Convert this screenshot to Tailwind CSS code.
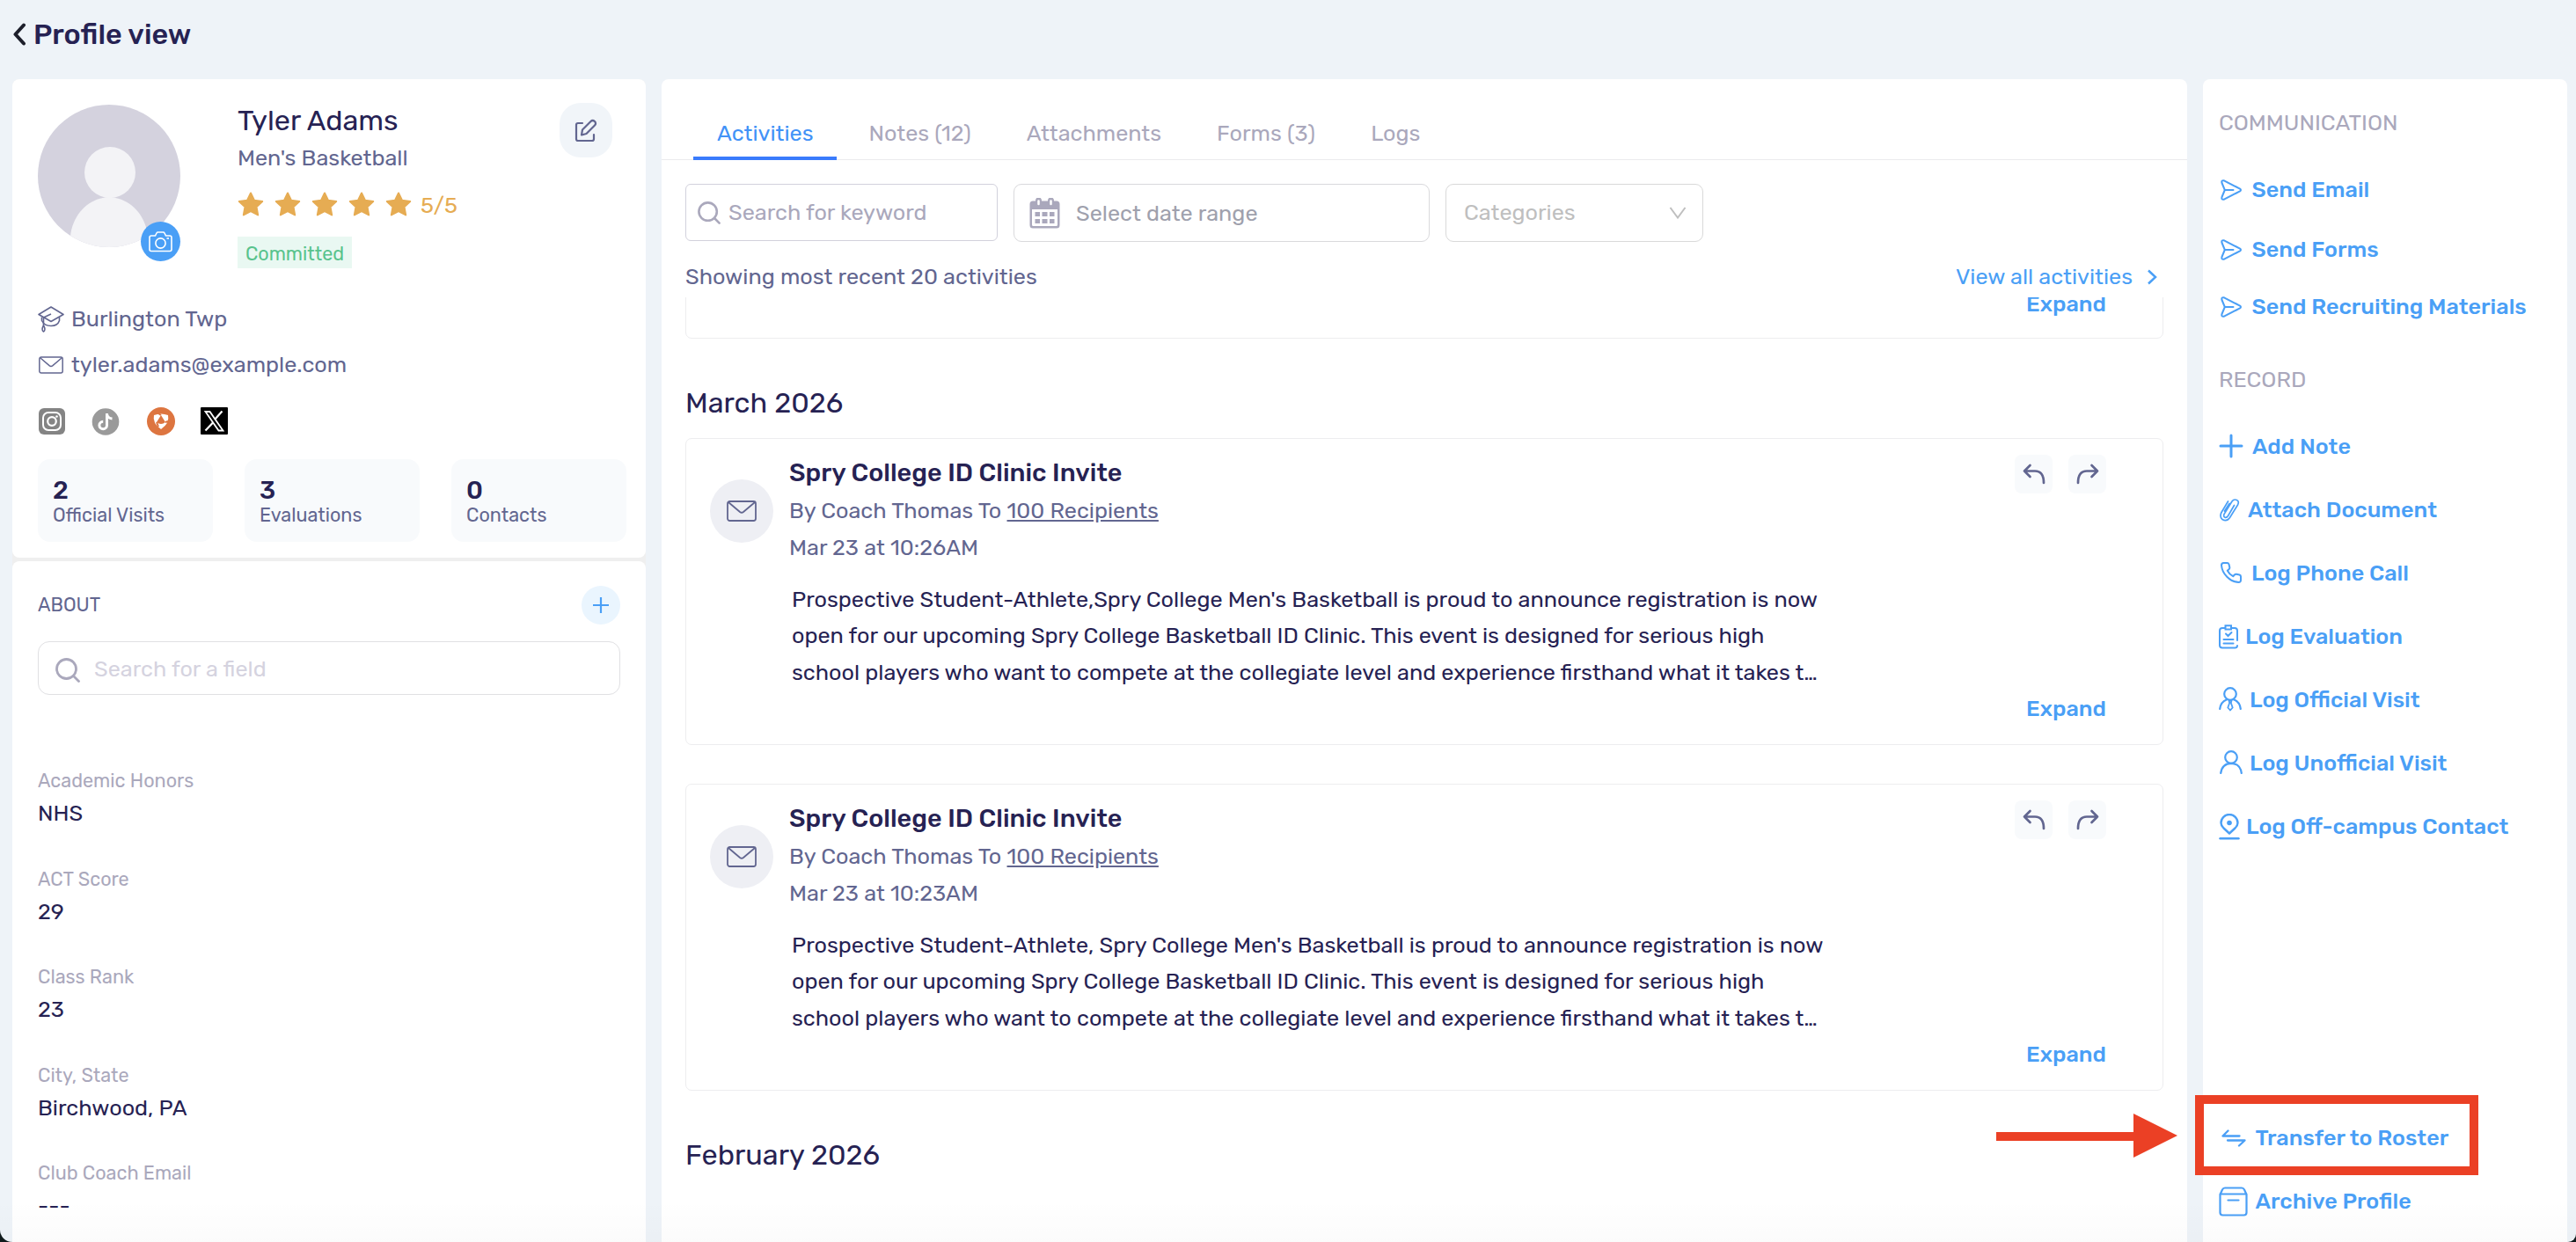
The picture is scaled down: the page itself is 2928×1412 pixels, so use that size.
<!DOCTYPE html>
<html>

<head>
    <meta charset="utf-8">
    <title>Profile view</title>
    <script src="https://cdn.jsdelivr.net/npm/@tailwindcss/browser@4"></script>
</head>

<body class="bg-[#101a1c] font-['Rubik','Roboto',sans-serif] text-[25.2px] text-[#262253]">

    <!-- shared icons -->
    <svg class="hidden">
        <symbol id="star" viewBox="0 0 30 28">
            <path d="M15 1.5l4 8.3 9.2 1.2-6.7 6.2 1.7 9.2-8.2-4.4-8.2 4.4 1.7-9.2L1.800 11l9.200-1.200z" fill="#e6ac53" stroke="#e6ac53" stroke-width="2" stroke-linejoin="round" />
        </symbol>
        <symbol id="mail" viewBox="0 0 34 24">
            <rect x="1" y="1" width="32" height="22" rx="2.5" fill="none" stroke="currentColor" stroke-width="1.8" />
            <path d="M2 2l13 11q2 1.5 4 0L32 2" fill="none" stroke="currentColor" stroke-width="1.8" />
        </symbol>
        <symbol id="search" viewBox="0 0 28 28">
            <circle cx="12.5" cy="12.5" r="11" fill="none" stroke="currentColor" stroke-width="2.8" />
            <path d="M20.5 20.5l6 6" stroke="currentColor" stroke-width="2.8" stroke-linecap="round" />
        </symbol>
        <symbol id="send" viewBox="0 0 24 24">
            <path d="M4 1.3L22 10.6q2 1.4 0 2.8L4 22.7Q.6 23.4 1.5 20L4.8 12 1.5 4Q.6.6 4 1.3zM5 12h9.5" fill="none" stroke="currentColor" stroke-width="2" stroke-linecap="round" stroke-linejoin="round" />
        </symbol>
        <symbol id="reply" viewBox="0 0 26 24">
            <path d="M8.5 2L2 8.5l6.5 6.5M2 8.5h12q10 0 10 13.5" fill="none" stroke="currentColor" stroke-width="2.7" stroke-linecap="round" stroke-linejoin="round" />
        </symbol>
    </svg>

    <div class="relative w-[2928px] h-[1412px] overflow-hidden bg-[#eef3f8] rounded-bl-[14px] rounded-br-[9px]">

        <header class="flex items-center h-[90px] pb-3 pl-[14px]">
            <svg class="w-4 h-[26px] text-[#1d1f2b]" viewBox="0 0 16 26"><path d="M13 2.5L3.5 13 13 23.5" fill="none" stroke="currentColor" stroke-width="4" stroke-linecap="round" stroke-linejoin="round" /></svg>
            <h1 class="ml-2 text-[32.4px] leading-[44px] font-medium">Profile view</h1>
        </header>

        <div class="flex h-[1322px]">

            <!-- left column -->
            <aside class="ml-[14px] w-[720px] flex flex-col bg-[#efefef] rounded-t-lg">
                <section class="h-[544px] bg-white rounded-lg pl-[29px]">
                    <div class="h-[247px] flex">
                        <div class="relative w-[162px] h-[162px] mt-[29px]">
                            <svg class="w-[162px] h-[162px] rounded-full bg-[#d4d2de]" viewBox="0 0 162 162" fill="#f3f3f6">
                                <circle cx="82" cy="77" r="29" />
                                <path d="M37 162v-12c2-24 20-44 44-45 24 1 42 21 44 45v12z" />
                            </svg>
                            <div class="absolute left-[117px] top-[133px] w-[45px] h-[45px] rounded-full bg-[#4a9ff6] flex items-center justify-center">
                                <svg class="w-[27px] h-6 text-white" viewBox="0 0 27 24" fill="none" stroke="currentColor" stroke-width="1.6">
                                    <path d="M3 5h4.500L9 2q.5-1 1.500-1h6q1 0 1.500 1l1.500 3H24q2 0 2 2v13.500q0 2-2 2H3q-2 0-2-2V7q0-2 2-2z" />
                                    <circle cx="13.5" cy="13.5" r="5.6" />
                                    <path d="M20.5 8h2.5" />
                                </svg>
                            </div>
                        </div>
                        <div class="ml-[65px] pt-[25px] w-[366px]">
                            <div class="text-[32.4px] leading-[44px]">Tyler Adams</div>
                            <div class="leading-[41px] text-[#626690]">Men's Basketball</div>
                            <div class="mt-3 h-10 flex items-center gap-3">
                                <svg class="w-[30px] h-7"><use href="#star" /></svg>
                                <svg class="w-[30px] h-7"><use href="#star" /></svg>
                                <svg class="w-[30px] h-7"><use href="#star" /></svg>
                                <svg class="w-[30px] h-7"><use href="#star" /></svg>
                                <svg class="w-[30px] h-7"><use href="#star" /></svg>
                                <span class="-ml-0.5 pt-1 text-[#e6ac53]">5/5</span>
                            </div>
                            <div class="mt-[17px] w-[130px] h-9 pt-0.5 text-center text-[21.6px] leading-[35px] bg-[#e9f8f2] text-[#58c38d]">Committed</div>
                        </div>
                        <div class="mt-[27px] w-[60px] h-[62px] rounded-[24px] bg-[#f1f5f9] flex items-center justify-center">
                            <svg class="w-[26px] h-[27px] text-[#626690]" viewBox="0 0 26 27" fill="none" stroke="currentColor" stroke-width="2.2" stroke-linejoin="round" stroke-linecap="round">
                                <path d="M9 5H4Q2 5 2 7v16q0 2 2 2h16q2 0 2-2v-5" />
                                <path d="M8 18.500l1-6L18.500 3q2-2 4.500 0 2 2.500 0 4.500L13.500 17z" />
                            </svg>
                        </div>
                    </div>

                    <div class="h-[52px] flex items-center text-[#626690]">
                        <svg class="w-[30px] h-[30px]" viewBox="0 0 30 30" fill="none" stroke="currentColor" stroke-width="1.6" stroke-linejoin="round">
                            <path d="M1 9.500L15 1l14 8.500-14 8zM15 9l-8.500 4v9" />
                            <path d="M4.500 12.500v4q3 6 10.500 6t9.500-6v-4" />
                            <path d="M6.500 22q-3 5 0 7 3-2 0-7z" />
                        </svg>
                        <span class="ml-2">Burlington Twp</span>
                    </div>
                    <div class="h-[52px] flex items-center text-[#626690]">
                        <svg class="ml-px w-[28px] h-5"><use href="#mail" /></svg>
                        <span class="ml-[9px]">tyler.adams@example.com</span>
                    </div>

                    <div class="h-[75px] flex items-center">
                        <svg class="ml-px w-[30px] h-[30px]" viewBox="0 0 30 30" fill="none" stroke="#fff">
                            <rect width="30" height="30" rx="6" fill="#848484" stroke="none" />
                            <rect x="5" y="5" width="20" height="20" rx="6" stroke-width="2" />
                            <circle cx="15" cy="15" r="4.8" stroke-width="2.2" />
                            <circle cx="20.5" cy="9.5" r="1.3" fill="#fff" stroke="none" />
                        </svg>
                        <svg class="ml-[30px] w-8 h-8" viewBox="0 0 32 32">
                            <circle cx="16" cy="16.5" r="15.3" fill="#9a9a9a" />
                            <path d="M17.500 7v13.500a4.300 4.300 0 1 1-4.300-4.300M17.500 8q1 4.500 6 5" fill="none" stroke="#fff" stroke-width="3" />
                        </svg>
                        <svg class="ml-[31px] w-8 h-8" viewBox="0 0 32 32">
                            <circle cx="16" cy="16" r="16" fill="#dd7540" />
                            <path d="M8 9q8-3 16 0 2 9-8 16Q6 18 8 9z" fill="#fff" />
                            <path d="M16 9l5 8q-5 4-10 0z" fill="#dd7540" />
                            <path d="M16 9l-3-2M21 17l3-1M11 17l2 5" stroke="#dd7540" stroke-width="2" />
                        </svg>
                        <svg class="ml-[29px] w-[31px] h-[31px]" viewBox="0 0 31 31" fill="none" stroke="#fff">
                            <rect width="31" height="31" rx="1" fill="#000" stroke="none" />
                            <path d="M5.500 5h5l15 21.500h-5z" stroke-width="1.8" />
                            <path d="M24.500 4.500l-8.500 9.500M14 17.500l-8.500 9" stroke-width="2.2" />
                        </svg>
                    </div>

                    <div class="mt-[6px] flex gap-9">
                        <div class="w-[199px] h-[94px] rounded-[14px] bg-[#f8fafc] pt-5 pl-[17px]">
                            <div class="text-[28.8px] leading-[30px] font-medium">2</div>
                            <div class="text-[21.6px] leading-[28px] text-[#626690]">Official Visits</div>
                        </div>
                        <div class="w-[199px] h-[94px] rounded-[14px] bg-[#f8fafc] pt-5 pl-[17px]">
                            <div class="text-[28.8px] leading-[30px] font-medium">3</div>
                            <div class="text-[21.6px] leading-[28px] text-[#626690]">Evaluations</div>
                        </div>
                        <div class="w-[199px] h-[94px] rounded-[14px] bg-[#f8fafc] pt-5 pl-[17px]">
                            <div class="text-[28.8px] leading-[30px] font-medium">0</div>
                            <div class="text-[21.6px] leading-[28px] text-[#626690]">Contacts</div>
                        </div>
                    </div>
                </section>

                <section class="mt-1 flex-1 bg-white rounded-t-lg px-[29px] pt-7">
                    <div class="h-11 flex items-center justify-between">
                        <span class="text-[21.6px] text-[#626690]">ABOUT</span>
                        <div class="w-11 h-11 rounded-full bg-[#eaf5fe] flex items-center justify-center text-[#4a9ff6]">
                            <svg class="w-[18px] h-[18px]" viewBox="0 0 18 18"><path d="M9 0v18M0 9h18" stroke="currentColor" stroke-width="2.2" /></svg>
                        </div>
                    </div>
                    <div class="mt-[19px] h-[61px] border border-[#e0e0e3] rounded-[13px] flex items-center pl-[19px]">
                        <svg class="w-7 h-7 mt-1 text-[#aaa8bc]"><use href="#search" /></svg>
                        <span class="ml-4 pt-0.5 text-[#d5d3df]">Search for a field</span>
                    </div>

                    <div class="mt-20">
                        <div class="h-[111.5px]">
                            <div class="text-[21.6px] leading-9 text-[#aaa8bc]">Academic Honors</div>
                            <div class="leading-[37px]">NHS</div>
                        </div>
                        <div class="h-[111.5px]">
                            <div class="text-[21.6px] leading-9 text-[#aaa8bc]">ACT Score</div>
                            <div class="leading-[37px]">29</div>
                        </div>
                        <div class="h-[111.5px]">
                            <div class="text-[21.6px] leading-9 text-[#aaa8bc]">Class Rank</div>
                            <div class="leading-[37px]">23</div>
                        </div>
                        <div class="h-[111.5px]">
                            <div class="text-[21.6px] leading-9 text-[#aaa8bc]">City, State</div>
                            <div class="leading-[37px]">Birchwood, PA</div>
                        </div>
                        <div>
                            <div class="text-[21.6px] leading-9 text-[#aaa8bc]">Club Coach Email</div>
                            <div class="leading-[37px]">---</div>
                        </div>
                    </div>
                </section>
            </aside>

            <!-- activities -->
            <main class="ml-[18px] w-[1734px] bg-white rounded-t-lg flex flex-col">
                <nav class="h-[92px] shrink-0 border-b border-[#ebebed] flex items-end gap-[63px] pl-[63px] text-[#aaa8bc] leading-[41px]">
                    <div class="relative pb-[9px] text-[#4292f7]">Activities<span class="absolute -left-[27px] -right-[26px] -bottom-px h-1 bg-[#3a7bfc]"></span></div>
                    <div class="pb-[9px]">Notes (12)</div>
                    <div class="pb-[9px]">Attachments</div>
                    <div class="pb-[9px]">Forms (3)</div>
                    <div class="pb-[9px]">Logs</div>
                </nav>

                <div class="mt-[27px] ml-[27px] flex gap-[18px]">
                    <div class="w-[355px] h-[65px] border border-[#d2d1dc] rounded-[6px] flex items-center pl-[13px] text-[#aaa8bc]">
                        <svg class="w-[26px] h-[26px]"><use href="#search" /></svg>
                        <span class="ml-[9px]">Search for keyword</span>
                    </div>
                    <div class="w-[473px] h-[66px] border border-[#d9d9dc] rounded-[9px] flex items-center pl-[17px] text-[#9fa1ad]">
                        <svg class="w-[35px] h-[35px] text-[#aaa8bc]" viewBox="0 0 35 35">
                            <path d="M4 3.500h27q3.500 0 3.500 3.500v24q0 3.500-3.500 3.500H4Q.5 34.500.5 31V7Q.5 3.500 4 3.500zM3 13v17.500q0 1.500 1.500 1.500h26q1.500 0 1.500-1.500V13z" fill="currentColor" fill-rule="evenodd" />
                            <path d="M10.500 3v4M24.500 3v4" stroke="currentColor" stroke-width="7" stroke-linecap="round" />
                            <path d="M10.500 3.500v3.500M24.500 3.500v3.500" stroke="#fff" stroke-width="2.5" stroke-linecap="round" />
                            <path d="M6.500 18.500h5.500m2.500 0h6m2.500 0h5.500M6.500 26.500h5.500m2.500 0h6m2.500 0h5.500" stroke="currentColor" stroke-width="5" />
                        </svg>
                        <span class="ml-[18px] pt-0.5">Select date range</span>
                    </div>
                    <div class="w-[293px] h-[66px] border border-[#d9d9d9] rounded-[9px] flex items-center justify-between pl-5 pr-[18px] text-[#bfbfbf]">
                        <span>Categories</span>
                        <svg class="w-5 h-3.5" viewBox="0 0 20 14"><path d="M1.5 1L10 12.5 18.5 1" fill="none" stroke="currentColor" stroke-width="2" /></svg>
                    </div>
                </div>

                <div class="mt-5 mx-[27px] h-[43px] pb-[3px] flex items-center justify-between">
                    <span class="text-[#626690]">Showing most recent 20 activities</span>
                    <span class="flex items-center text-[#4a9ff6] pr-[7px]">View all activities
                        <svg class="ml-4 w-[12px] h-[18px]" viewBox="0 0 12 18"><path d="M2 1.5L10 9l-8 7.5" fill="none" stroke="currentColor" stroke-width="2.5" /></svg>
                    </span>
                </div>

                <div class="flex-1 overflow-hidden pl-[27px]">
                    <div class="-mt-[100px] w-[1680px] h-[147px] border border-[#ededef] rounded-[7px] flex items-end justify-end pb-[18px] pr-16">
                        <span class="font-medium leading-[41px] text-[#4a9ff6]">Expand</span>
                    </div>

                    <h2 class="mt-[51px] mb-[18px] text-[32.4px] leading-[44px]">March 2026</h2>

                    <article class="w-[1680px] h-[349px] border border-[#ededef] rounded-[7px] flex pl-[27px] pr-16">
                        <div class="mt-[46px] w-[72px] h-[72px] rounded-full bg-[#eeeff4] flex items-center justify-center text-[#626690]">
                            <svg class="w-[34px] h-6"><use href="#mail" /></svg>
                        </div>
                        <div class="ml-[18px] flex-1 pt-4">
                            <div class="flex justify-between">
                                <div class="text-[#626690] leading-[42px]">
                                    <h3 class="text-[28.8px] leading-[44px] font-medium text-[#262253]">Spry College ID Clinic Invite</h3>
                                    <p>By Coach Thomas To <span class="underline">100 Recipients</span></p>
                                    <p>Mar 23 at 10:26AM</p>
                                </div>
                                <div class="mt-0.5 flex gap-[18px] text-[#626690]">
                                    <span class="w-[43px] h-11 rounded-lg bg-[#f8fafc] flex items-center justify-center"><svg class="w-[26px] h-6"><use href="#reply" /></svg></span>
                                    <span class="w-[43px] h-11 rounded-lg bg-[#f8fafc] flex items-center justify-center"><svg class="w-[26px] h-6 -scale-x-100"><use href="#reply" /></svg></span>
                                </div>
                            </div>
                            <p class="mt-[18px] ml-[3px] leading-[41.3px] whitespace-nowrap">Prospective Student-Athlete,Spry College Men's Basketball is proud to announce registration is now<br>open for our upcoming Spry College Basketball ID Clinic. This event is designed for serious high<br>school players who want to compete at the collegiate level and experience firsthand what it takes t…</p>
                            <div class="text-right font-medium leading-[41px] text-[#4a9ff6]">Expand</div>
                        </div>
                    </article>

                    <article class="mt-[44px] w-[1680px] h-[349px] border border-[#ededef] rounded-[7px] flex pl-[27px] pr-16">
                        <div class="mt-[46px] w-[72px] h-[72px] rounded-full bg-[#eeeff4] flex items-center justify-center text-[#626690]">
                            <svg class="w-[34px] h-6"><use href="#mail" /></svg>
                        </div>
                        <div class="ml-[18px] flex-1 pt-4">
                            <div class="flex justify-between">
                                <div class="text-[#626690] leading-[42px]">
                                    <h3 class="text-[28.8px] leading-[44px] font-medium text-[#262253]">Spry College ID Clinic Invite</h3>
                                    <p>By Coach Thomas To <span class="underline">100 Recipients</span></p>
                                    <p>Mar 23 at 10:23AM</p>
                                </div>
                                <div class="mt-0.5 flex gap-[18px] text-[#626690]">
                                    <span class="w-[43px] h-11 rounded-lg bg-[#f8fafc] flex items-center justify-center"><svg class="w-[26px] h-6"><use href="#reply" /></svg></span>
                                    <span class="w-[43px] h-11 rounded-lg bg-[#f8fafc] flex items-center justify-center"><svg class="w-[26px] h-6 -scale-x-100"><use href="#reply" /></svg></span>
                                </div>
                            </div>
                            <p class="mt-[18px] ml-[3px] leading-[41.3px] whitespace-nowrap">Prospective Student-Athlete, Spry College Men's Basketball is proud to announce registration is now<br>open for our upcoming Spry College Basketball ID Clinic. This event is designed for serious high<br>school players who want to compete at the collegiate level and experience firsthand what it takes t…</p>
                            <div class="text-right font-medium leading-[41px] text-[#4a9ff6]">Expand</div>
                        </div>
                    </article>

                    <h2 class="mt-[51px] text-[32.4px] leading-[44px]">February 2026</h2>
                </div>
            </main>

            <!-- actions -->
            <aside class="ml-[18px] w-[414px] bg-white rounded-t-lg pl-[18px] pt-[29px] font-medium text-[#4a9ff6]">
                <div class="h-10 leading-10 font-normal text-[#aaa8bc]">COMMUNICATION</div>
                <div class="mt-[23px] h-[68px] flex items-center">
                    <span class="w-[37.5px] pl-0.5"><svg class="w-6 h-6"><use href="#send" /></svg></span>Send Email
                </div>
                <div class="h-[68px] flex items-center">
                    <span class="w-[37.5px] pl-0.5"><svg class="w-6 h-6"><use href="#send" /></svg></span>Send Forms
                </div>
                <div class="h-[62px] flex items-center">
                    <span class="w-[37.5px] pl-0.5"><svg class="w-6 h-6"><use href="#send" /></svg></span>Send Recruiting Materials
                </div>

                <div class="mt-[31px] h-10 leading-10 font-normal text-[#aaa8bc]">RECORD</div>
                <div class="mt-[21px] h-[72px] flex items-center">
                    <span class="w-[38px]">
                        <svg class="w-7 h-7 -mt-0.5" viewBox="0 0 28 28"><path d="M14 2v24M2 14h24" stroke="currentColor" stroke-width="3" stroke-linecap="round" /></svg>
                    </span>Add Note
                </div>
                <div class="h-[72px] flex items-center">
                    <span class="w-[33px]">
                        <svg class="w-6 h-[26px]" viewBox="0 0 24 26" fill="none" stroke="currentColor" stroke-width="1.7" stroke-linecap="round">
                            <path d="M10.500 3L3 15.500Q.5 20.500 4 23.500q5 3 8.500-2L21.500 7q2-4-1-5.500-3.500-1.500-5.500 1.500L6 17.500q-1 3 1 3.700 2 .6 3.500-1.700L17.500 7.500M12 5.500L6.500 14" />
                        </svg>
                    </span>Attach Document
                </div>
                <div class="h-[72px] flex items-center">
                    <span class="w-[37px] pl-0.5">
                        <svg class="w-6 h-6 -mt-0.5" viewBox="0 0 24 24" fill="none" stroke="currentColor" stroke-width="2" stroke-linejoin="round">
                            <path d="M3.500 1h4q1.500 0 2 1.500l.8 3.500q.2 1.300-.8 2.200L7.800 9.800q2 4 6.400 6.400l1.600-1.700q.9-1 2.200-.8l3.500.8q1.500.5 1.500 2v4q0 2.500-2.500 2.500Q13 22.500 7.300 16.700 1.500 11 1 3.500 1 1 3.500 1z" />
                        </svg>
                    </span>Log Phone Call
                </div>
                <div class="h-[72px] flex items-center">
                    <span class="w-[30px]">
                        <svg class="w-[22px] h-7" viewBox="0 0 22 28" fill="none" stroke="currentColor" stroke-width="2" stroke-linecap="round">
                            <path d="M7 4H4Q1 4 1 7v16.500q0 3 3 3h14q3 0 3-2.500M15 4h3q3 0 3 3v11" />
                            <path d="M7.500 1.300h6.500v4.200H7.500zM8 10.500l2.500 2.500 4-4M5.500 17h11M5.500 21.500h11" />
                        </svg>
                    </span>Log Evaluation
                </div>
                <div class="h-[72px] flex items-center">
                    <span class="w-[35px]">
                        <svg class="w-[26px] h-7 -mt-0.5" viewBox="0 0 26 28" fill="none" stroke="currentColor" stroke-width="2.2" stroke-linecap="round">
                            <circle cx="13" cy="8" r="6.8" />
                            <path d="M1.200 25q1-8 7.500-10.500M24.800 25q-1-8-7.500-10.500" />
                            <path d="M11.500 15.500h3L13.800 18l1.900 5.500L13 26.500l-2.700-3L12.200 18z" stroke-width="1.8" stroke-linejoin="round" />
                        </svg>
                    </span>Log Official Visit
                </div>
                <div class="h-[72px] flex items-center">
                    <span class="w-[35px] pl-px">
                        <svg class="w-[26px] h-7 -mt-0.5" viewBox="0 0 26 28" fill="none" stroke="currentColor" stroke-width="2.2" stroke-linecap="round">
                            <circle cx="13" cy="8" r="6.8" />
                            <path d="M1.200 26q1.500-11 11.800-11.200Q23.300 15 24.800 26" />
                        </svg>
                    </span>Log Unofficial Visit
                </div>
                <div class="h-[72px] flex items-center">
                    <span class="w-[31px]">
                        <svg class="w-6 h-[30px]" viewBox="0 0 24 30" fill="none" stroke="currentColor" stroke-width="2.4" stroke-linecap="round">
                            <path d="M12 22.500L5.500 16.500Q2.500 13.500 2.500 10.500a9.500 9.500 0 0 1 19 0q0 3-3 6z" stroke-linejoin="round" />
                            <circle cx="12" cy="10.5" r="2.8" fill="currentColor" stroke="none" />
                            <path d="M1.500 28.300h21" />
                        </svg>
                    </span>Log Off-campus Contact
                </div>

                <div class="mt-[282px] h-[72px] flex items-center">
                    <span class="w-[41.5px] pl-[3px]">
                        <svg class="w-7 h-5" viewBox="0 0 28 20" fill="none" stroke="currentColor" stroke-width="2.3" stroke-linecap="round" stroke-linejoin="round">
                            <path d="M7.500 1.500L1.500 7.500h19M7 12.500h19.500l-6.500 6" />
                        </svg>
                    </span>Transfer to Roster
                </div>
                <div class="h-[72px] flex items-center">
                    <span class="w-[41.5px]">
                        <svg class="w-[33px] h-[34px]" viewBox="0 0 33 34" fill="none" stroke="currentColor" stroke-width="2.2" stroke-linecap="round" stroke-linejoin="round">
                            <path d="M1.500 9v20.500q0 3 3 3h24q3 0 3-3V9l-2.500-5.500Q28 1.500 26 1.500H7Q5 1.500 4 3.500zM1.500 8.500h30M10.500 15.500h12" />
                        </svg>
                    </span>Archive Profile
                </div>
            </aside>
        </div>

        <!-- highlight on the transfer action -->
        <div class="absolute left-[2495px] top-[1245px] w-[322px] h-[91px] border-[10px] border-[#eb4025]"></div>
        <svg class="absolute left-[2269px] top-[1266px] w-[206px] h-[50px]" viewBox="0 0 206 50" fill="#eb4025">
            <path d="M0 21h156V0l50 25-50 25V31H0z" />
        </svg>
        <div class="absolute inset-x-0 bottom-0 h-12 bg-linear-to-b from-black/0 to-black/[.015]"></div>
    </div>
</body>

</html>
